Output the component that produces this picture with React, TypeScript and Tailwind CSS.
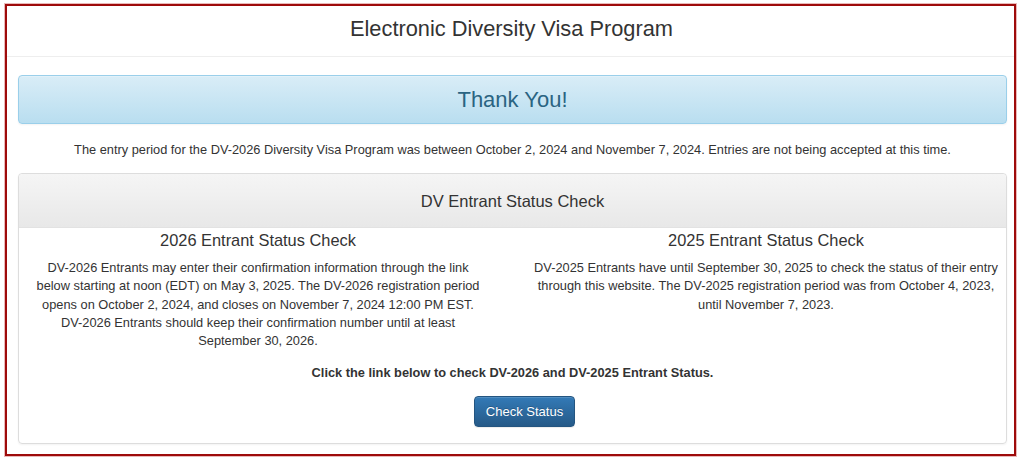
export default function App() {
  return (
    <div className="w-[1024px] h-[460px] bg-white pt-[4px] pl-[5px] font-['Liberation_Sans',Arial,sans-serif] text-[#333]">
      <div className="w-[1011px] h-[452px] border-2 border-[#9e0b0b] shadow-[0_0_0_1px_#e9b9b9] flex flex-col">
        <div className="h-[51px] border-b border-[#eeeeee] flex items-center justify-center">
          <h1 className="text-[21.8px] leading-none pb-[4px] pl-[2px]">Electronic Diversity Visa Program</h1>
        </div>

        <div className="ml-[11px] mr-[7px] mt-[18px] flex flex-col">
          <div className="h-[49px] rounded-[4px] border border-[#9acfea] bg-gradient-to-b from-[#d9edf7] to-[#b9def0] flex items-center justify-center shadow-[inset_0_1px_0_rgba(255,255,255,0.25),0_1px_2px_rgba(0,0,0,0.05)]">
            <h2 className="text-[22px] text-[#2a6482] leading-none">Thank You!</h2>
          </div>

          <p className="text-[12.8px] text-center mt-[17px] leading-[18px]">
            The entry period for the DV-2026 Diversity Visa Program was between October 2, 2024 and November 7, 2024. Entries are not being accepted at this time.
          </p>

          <div className="mt-[14px] h-[271px] rounded-[4px] border border-[#dddddd] flex flex-col shadow-[0_1px_2px_rgba(0,0,0,0.05)]">
            <div className="h-[54px] rounded-t-[4px] border-b border-[#e2e2e2] bg-gradient-to-b from-[#f5f5f5] to-[#e8e8e8] flex items-center justify-center">
              <h3 className="text-[16.5px] leading-none pt-[2px]">DV Entrant Status Check</h3>
            </div>

            <div className="grid grid-cols-[450px_470px] gap-[48px] pl-[14px] pt-[2px]">
              <div className="text-center">
                <h4 className="text-[16.4px] leading-[20px]">2026 Entrant Status Check</h4>
                <p className="text-[12.8px] leading-[18.3px] mt-[9px]">
                  DV-2026 Entrants may enter their confirmation information through the link below starting at noon (EDT) on May 3, 2025. The DV-2026 registration period opens on October 2, 2024, and closes on November 7, 2024 12:00 PM EST. DV-2026 Entrants should keep their confirmation number until at least September 30, 2026.
                </p>
              </div>
              <div className="text-center">
                <h4 className="text-[16.4px] leading-[20px]">2025 Entrant Status Check</h4>
                <p className="text-[12.8px] leading-[18.3px] mt-[9px]">
                  DV-2025 Entrants have until September 30, 2025 to check the status of their entry through this website. The DV-2025 registration period was from October 4, 2023, until November 7, 2023.
                </p>
              </div>
            </div>

            <p className="text-[12.8px] font-bold text-center mt-[14px] leading-[18px]">
              Click the link below to check DV-2026 and DV-2025 Entrant Status.
            </p>

            <div className="flex justify-center mt-[14px] pl-[24px]">
              <button className="w-[101px] h-[31px] rounded-[4px] border border-[#245580] bg-gradient-to-b from-[#337ab7] to-[#265a88] text-white text-[13px] shadow-[inset_0_1px_0_rgba(255,255,255,0.15),0_1px_1px_rgba(0,0,0,0.075)] [text-shadow:0_-1px_0_rgba(0,0,0,0.2)]">
                Check Status
              </button>
            </div>
          </div>
        </div>
      </div>
    </div>
  );
}
